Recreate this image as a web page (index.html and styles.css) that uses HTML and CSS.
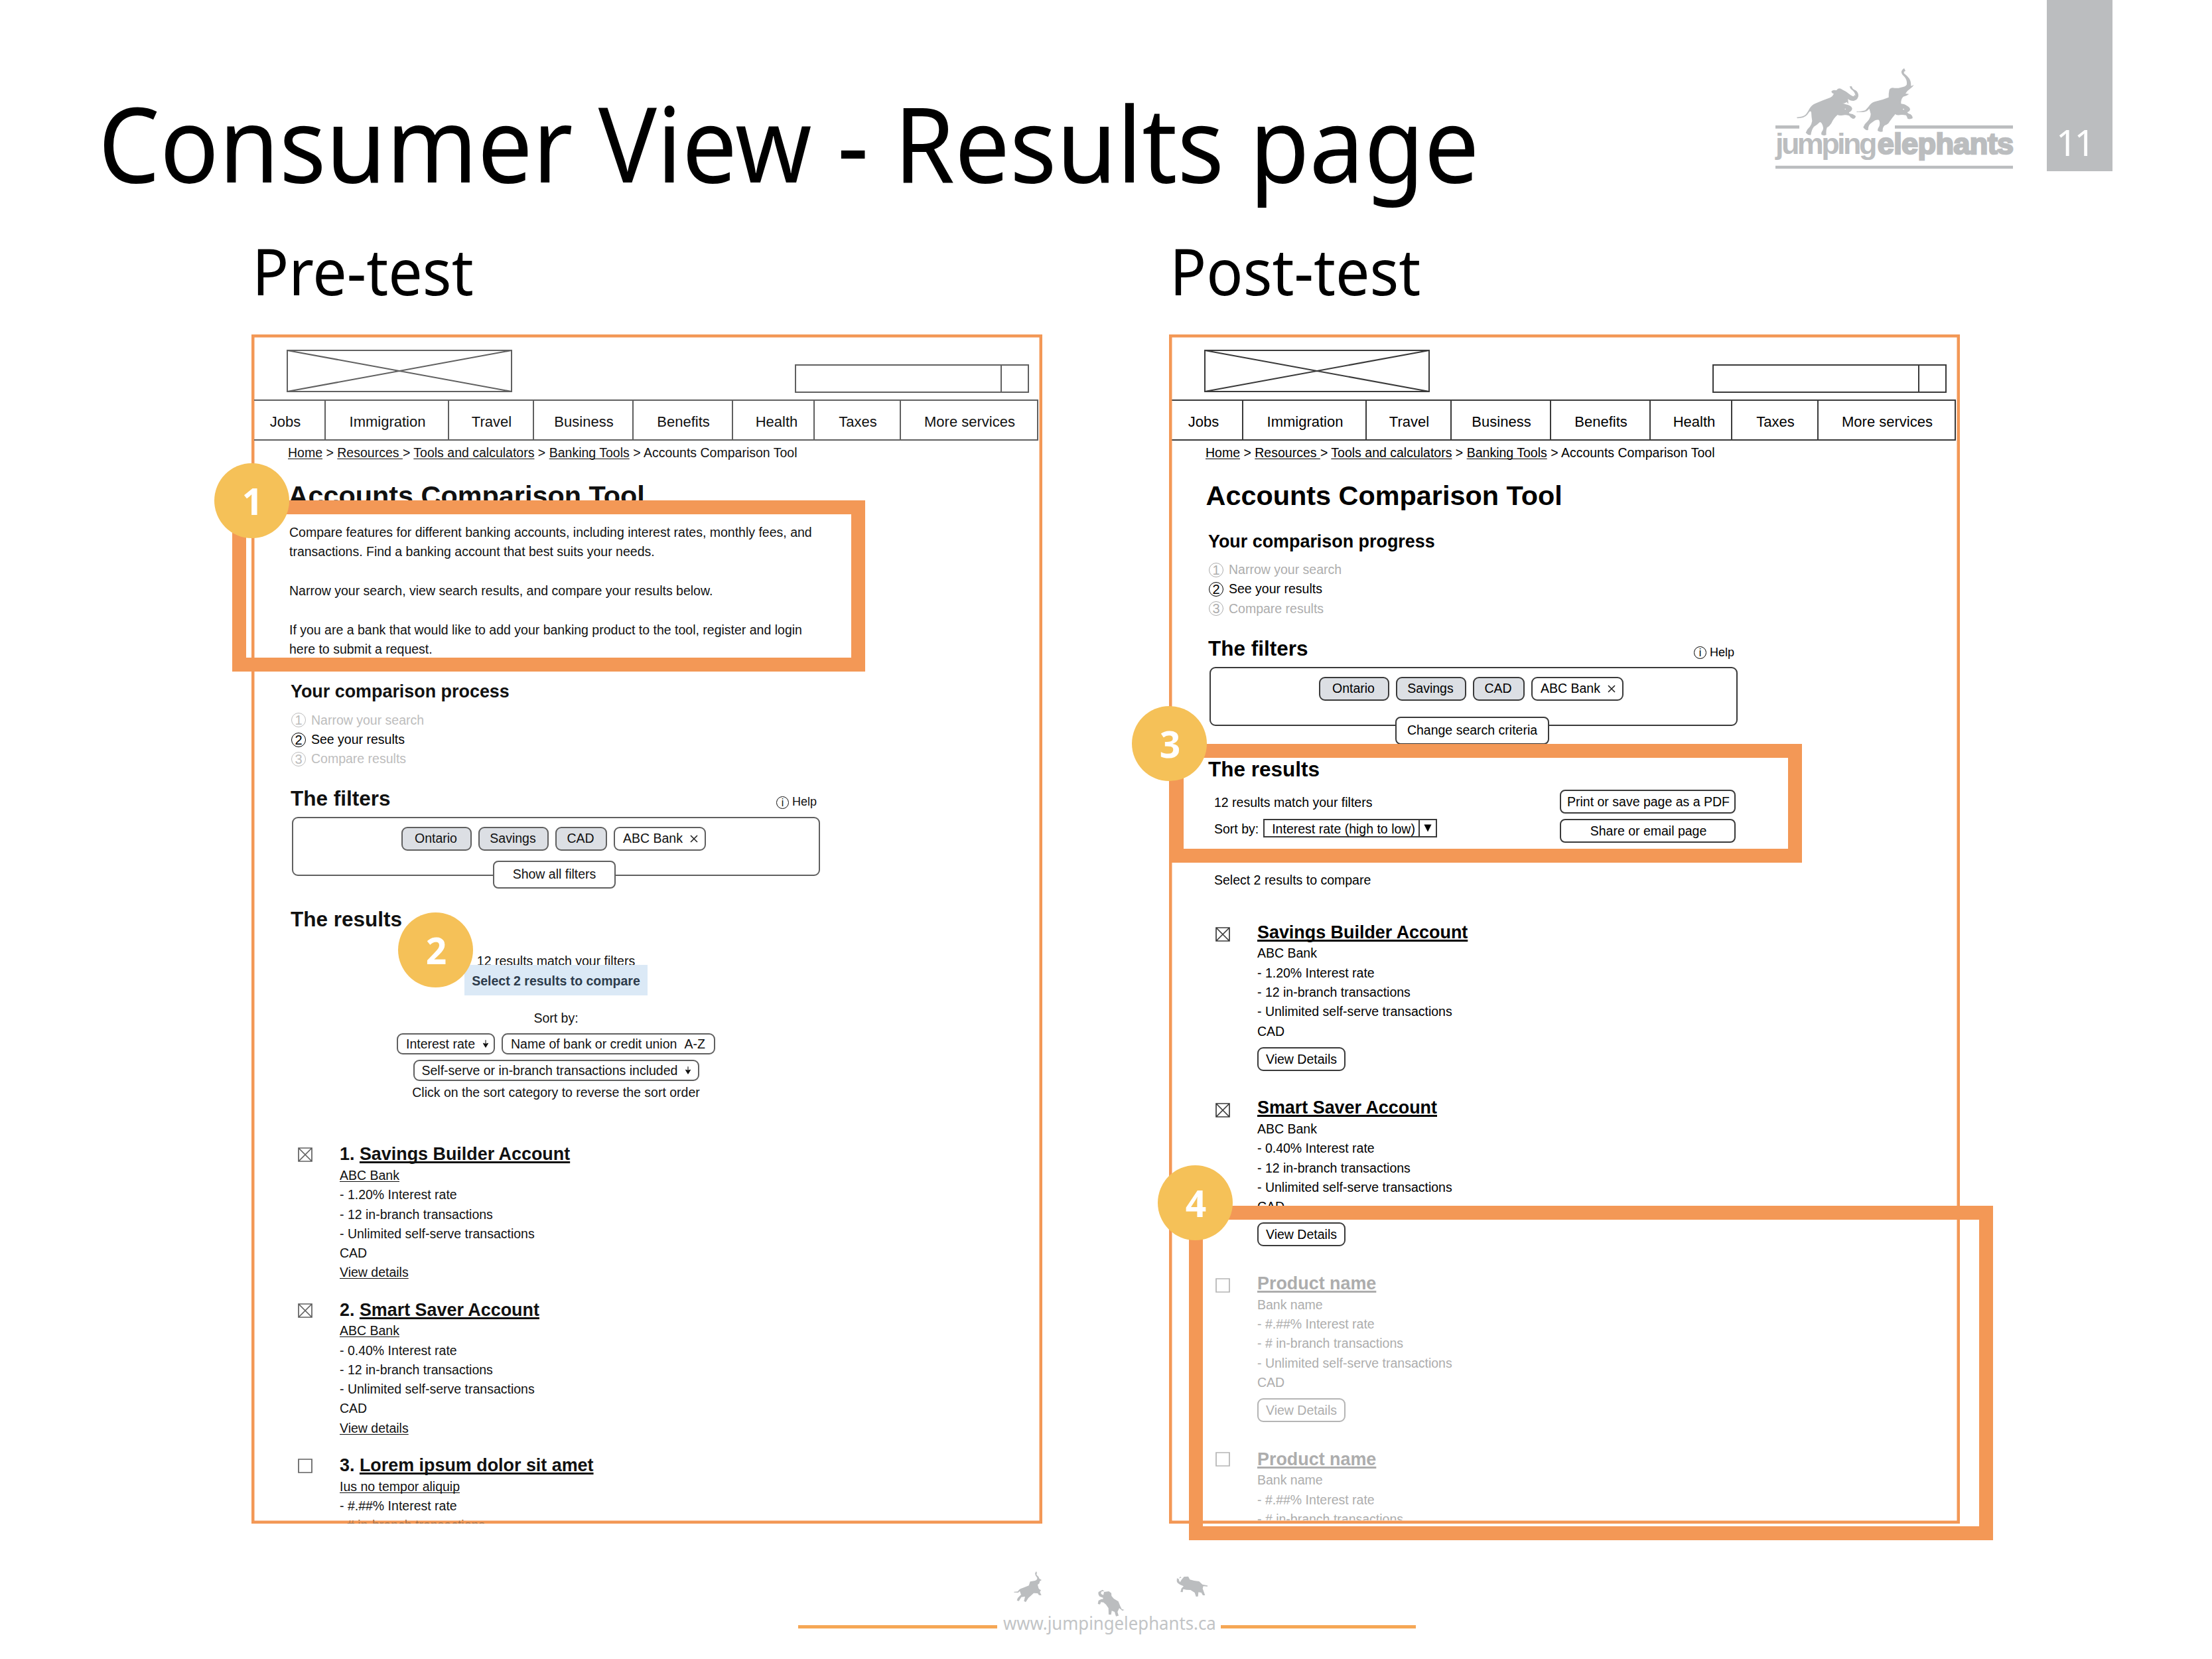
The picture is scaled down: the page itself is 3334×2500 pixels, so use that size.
FILE: index.html
```html
<!DOCTYPE html>
<html lang="en">
<head>
<meta charset="utf-8">
<title>Consumer View - Results page</title>
<link rel="stylesheet" href="styles.css">
</head>
<body>
<div class="slide">
  <header class="slide-header">
    <h1 class="slide-title"><span class="fit">Consumer View - Results page</span></h1>
    <div class="brand">
      <svg class="brand-art" viewBox="0 0 1074 420">
        <path d="M0 180H108V194H0Z M540 180H1074V194H540Z M0 362H1074V376H0Z" transform="translate(0 3)"/>
        <g transform="translate(72 -99)">
          <path d="M24 245 Q52 245 66 232 Q76 218 82 206 Q92 190 108 183 Q150 165 176 156 Q188 150 192 139 Q181 135 181 128 Q188 120 200 123 Q207 124 209 117 Q221 112 230 120 Q248 128 262 140 Q276 151 284 150 L284 143 L290 148 Q287 132 277 124 Q266 117 263 106 L273 105 Q275 118 290 123 Q304 132 303 150 Q298 169 280 171 Q264 171 256 162 L258 185 L250 176 Q240 185 229 181 L246 187 Q268 190 275 204 Q275 216 262 222 Q258 227 266 229 Q280 230 291 240 Q290 252 278 252 Q266 246 261 238 Q246 233 232 236 Q214 238 209 234 Q190 251 181 272 Q172 286 161 292 Q156 306 158 325 Q148 330 137 325 Q132 316 142 304 Q148 290 137 272 Q131 265 128 268 Q115 281 102 288 Q91 302 88 325 Q76 328 65 315 Q71 298 84 287 Q92 276 94 262 Q91 244 90 222 Q85 213 78 225 Q66 246 42 248 L27 250 Z M240 207 L246 211 L246 206 Z"/>
          <path d="M295 219 Q316 221 334 214 Q348 199 356 188 Q366 176 382 173 Q414 166 440 155 Q439 139 443 121 Q450 108 467 113 Q479 115 496 110 Q516 108 522 97 Q524 76 510 61 Q495 49 498 37 Q501 29 510 23 L516 36 Q506 38 510 47 Q522 55 533 70 Q542 84 541 104 L554 99 Q548 109 536 117 Q522 126 516 138 L532 140 Q520 150 506 152 Q494 164 496 184 Q514 186 522 193 Q536 200 537 210 Q534 220 524 222 Q526 228 538 231 Q550 240 548 250 Q538 255 526 252 Q523 242 519 236 Q500 232 490 235 Q476 237 470 231 Q456 247 444 265 Q438 278 422 282 Q411 292 413 310 Q401 314 390 306 Q390 296 398 284 Q402 268 396 257 Q382 253 364 269 Q346 279 347 303 Q335 306 325 290 Q332 274 346 262 Q358 247 359 230 Q355 214 352 206 Q343 220 322 222 L296 222 Z M503 208 L509 212 L510 206 Z"/>
        </g>
      </svg>
      <div class="brand-name"><span class="brand-a">jumping</span><span class="brand-b">elephants</span></div>
    </div>
    <div class="page-number">11</div>
  </header>

  <main class="columns">
    <section class="column">
      <h2 class="column-title"><span class="fit">Pre-test</span></h2>
      <div class="panel pre">
        <div class="masthead">
          <svg class="logo-box" viewBox="0 0 340 64"><path d="M1 1H339V63H1Z L339 63 M1 63L339 1"/></svg>
          <div class="search"><span></span></div>
        </div>
        <nav class="menu"><span>Jobs</span><span>Immigration</span><span>Travel</span><span>Business</span><span>Benefits</span><span>Health</span><span>Taxes</span><span>More services</span></nav>
        <div class="crumbs"><u>Home</u> &gt; <u>Resources </u>&gt; <u>Tools and calculators</u> &gt; <u>Banking Tools</u> &gt; Accounts Comparison Tool</div>
        <h3 class="tool-title">Accounts Comparison Tool</h3>
        <div class="intro">
          <p>Compare features for different banking accounts, including interest rates, monthly fees, and<br>transactions. Find a banking account that best suits your needs.</p>
          <p>Narrow your search, view search results, and compare your results below.</p>
          <p>If you are a bank that would like to add your banking product to the tool, register and login<br>here to submit a request.</p>
        </div>
        <h4 class="progress-title">Your comparison process</h4>
        <ol class="steps">
          <li><i>1</i>Narrow your search</li>
          <li class="current"><i>2</i>See your results</li>
          <li><i>3</i>Compare results</li>
        </ol>
        <div class="filters-head"><h4 class="section-title">The filters</h4><span class="help"><i>i</i>Help</span></div>
        <div class="filters">
          <span class="chip on">Ontario</span><span class="chip on">Savings</span><span class="chip on cad">CAD</span><span class="chip bank">ABC Bank<svg viewBox="0 0 12 12"><path d="M1 1L11 11M11 1L1 11"/></svg></span>
          <span class="filters-button">Show all filters</span>
        </div>
        <h4 class="section-title results-title">The results</h4>
        <div class="results-bar">
          <div class="match">12 results match your filters</div>
          <div class="highlight">Select 2 results to compare</div>
          <div class="sort-label">Sort by:</div>
          <div class="sort-row"><span class="pill rate">Interest rate<svg class="arrow" viewBox="0 0 9 13"><path d="M4.500 0V12M0.500 5.500L4.500 12L8.500 5.500Q4.500 8 0.500 5.500Z"/></svg></span><span class="pill name">Name of bank or credit union<span class="az">A-Z</span></span></div>
          <div class="sort-row"><span class="pill self">Self-serve or in-branch transactions included<svg class="arrow" viewBox="0 0 9 13"><path d="M4.500 0V12M0.500 5.500L4.500 12L8.500 5.500Q4.500 8 0.500 5.500Z"/></svg></span></div>
          <div class="sort-note">Click on the sort category to reverse the sort order</div>
        </div>
        <div class="items">
          <article class="item">
            <svg class="check" viewBox="0 0 22 22"><path d="M1 1H21V21H1Z L21 21M1 21L21 1"/></svg>
            <div><h5>1. <u>Savings Builder Account</u></h5><p><u>ABC Bank</u></p><p>- 1.20% Interest rate</p><p>- 12 in-branch transactions</p><p>- Unlimited self-serve transactions</p><p>CAD</p><p><u>View details</u></p></div>
          </article>
          <article class="item">
            <svg class="check" viewBox="0 0 22 22"><path d="M1 1H21V21H1Z L21 21M1 21L21 1"/></svg>
            <div><h5>2. <u>Smart Saver Account</u></h5><p><u>ABC Bank</u></p><p>- 0.40% Interest rate</p><p>- 12 in-branch transactions</p><p>- Unlimited self-serve transactions</p><p>CAD</p><p><u>View details</u></p></div>
          </article>
          <article class="item">
            <svg class="check" viewBox="0 0 22 22"><path d="M1 1H21V21H1Z"/></svg>
            <div><h5>3. <u>Lorem ipsum dolor sit amet</u></h5><p><u>Ius no tempor aliquip</u></p><p>- #.##% Interest rate</p><p class="faded"># in-branch transactions</p></div>
          </article>
        </div>
      </div>
    </section>

    <section class="column">
      <h2 class="column-title"><span class="fit">Post-test</span></h2>
      <div class="panel post">
        <div class="masthead">
          <svg class="logo-box" viewBox="0 0 340 64"><path d="M1 1H339V63H1Z L339 63 M1 63L339 1"/></svg>
          <div class="search"><span></span></div>
        </div>
        <nav class="menu"><span>Jobs</span><span>Immigration</span><span>Travel</span><span>Business</span><span>Benefits</span><span>Health</span><span>Taxes</span><span>More services</span></nav>
        <div class="crumbs"><u>Home</u> &gt; <u>Resources </u>&gt; <u>Tools and calculators</u> &gt; <u>Banking Tools</u> &gt; Accounts Comparison Tool</div>
        <h3 class="tool-title">Accounts Comparison Tool</h3>
        <h4 class="progress-title">Your comparison progress</h4>
        <ol class="steps">
          <li><i>1</i>Narrow your search</li>
          <li class="current"><i>2</i>See your results</li>
          <li><i>3</i>Compare results</li>
        </ol>
        <div class="filters-head"><h4 class="section-title">The filters</h4><span class="help"><i>i</i>Help</span></div>
        <div class="filters">
          <span class="chip on">Ontario</span><span class="chip on">Savings</span><span class="chip on cad">CAD</span><span class="chip bank">ABC Bank<svg viewBox="0 0 12 12"><path d="M1 1L11 11M11 1L1 11"/></svg></span>
          <span class="filters-button wide">Change search criteria</span>
        </div>
        <h4 class="section-title results-title">The results</h4>
        <div class="tools">
          <div class="tools-left">
            <div>12 results match your filters</div>
            <div class="sort-line">Sort by:<span class="select"><span>Interest rate (high to low)</span><svg viewBox="0 0 26 26"><path d="M7 7H19L13 19Z"/></svg></span></div>
          </div>
          <div class="tools-right"><span class="action">Print or save page as a PDF</span><span class="action">Share or email page</span></div>
        </div>
        <div class="select-note">Select 2 results to compare</div>
        <div class="items">
          <article class="item">
            <svg class="check" viewBox="0 0 22 22"><path d="M1 1H21V21H1Z L21 21M1 21L21 1"/></svg>
            <div><h5><u>Savings Builder Account</u></h5><p>ABC Bank</p><p>- 1.20% Interest rate</p><p>- 12 in-branch transactions</p><p>- Unlimited self-serve transactions</p><p>CAD</p><span class="details">View Details</span></div>
          </article>
          <article class="item">
            <svg class="check" viewBox="0 0 22 22"><path d="M1 1H21V21H1Z L21 21M1 21L21 1"/></svg>
            <div><h5><u>Smart Saver Account</u></h5><p>ABC Bank</p><p>- 0.40% Interest rate</p><p>- 12 in-branch transactions</p><p>- Unlimited self-serve transactions</p><p>CAD</p><span class="details">View Details</span></div>
          </article>
          <article class="item muted">
            <svg class="check" viewBox="0 0 22 22"><path d="M1 1H21V21H1Z"/></svg>
            <div><h5><u>Product name</u></h5><p>Bank name</p><p>- #.##% Interest rate</p><p>- # in-branch transactions</p><p>- Unlimited self-serve transactions</p><p>CAD</p><span class="details">View Details</span></div>
          </article>
          <article class="item muted">
            <svg class="check last" viewBox="0 0 22 22"><path d="M1 1H21V21H1Z"/></svg>
            <div><h5><u>Product name</u></h5><p>Bank name</p><p>- #.##% Interest rate</p><p>- # in-branch transactions</p></div>
          </article>
        </div>
      </div>
    </section>
  </main>

  <footer class="slide-footer">
    <span class="rule left"></span>
    <span class="site">www.jumpingelephants.ca</span>
    <span class="rule right"></span>
    <svg class="herd" viewBox="0 0 990 330">
      <path d="M156 23 L159 32 Q154 36 160 43 Q168 48 170 57 L180 63 L172 68 L169 79 L162 84 L166 100 Q170 108 177 109 L172 117 L179 132 L168 131 L162 123 L144 122 L131 134 L120 144 L108 163 L100 158 L105 138 L88 140 L77 158 L68 155 L72 144 L87 129 L81 113 L74 120 L55 119 L55 116 L72 115 Q80 102 94 99 L122 88 L128 70 L150 66 Q161 62 160 53 Q150 43 150 32 Z"/>
      <path d="M455 107 L464 114 L452 114 Q446 118 449 126 L459 131 L462 117 L484 114 L495 122 L496 135 L506 147 L527 160 L535 180 L542 194 L554 198 L545 202 L531 190 L523 207 L528 224 L516 227 L510 207 L497 202 L494 220 L483 219 L482 190 L471 174 L460 164 L448 163 L444 173 L434 171 L437 156 L450 149 L457 149 L458 143 L442 137 Q434 128 437 117 Z"/>
      <path d="M807 47 L812 52 L803 55 Q797 63 806 73 L812 62 L824 48 L843 47 L850 61 L870 66 L892 69 L907 83 L930 88 L930 92 L911 91 L908 101 L919 132 L909 132 L902 120 L889 118 L887 137 L878 138 L872 120 L853 108 L835 107 L820 104 L818 118 L808 117 L812 101 L822 91 L806 84 Q791 76 791 67 L792 54 L799 59 Z"/>
    </svg>
  </footer>

  <div class="frame frame-1"></div>
  <div class="frame frame-3"></div>
  <div class="frame frame-4"></div>
  <div class="badge badge-1">1</div>
  <div class="badge badge-2">2</div>
  <div class="badge badge-3">3</div>
  <div class="badge badge-4">4</div>
</div>
</body>
</html>
```
FILE: styles.css
```css
* { box-sizing: border-box; }
body { margin: 0; background: #fff; }
h1, h2, h3, h4, h5, p, ol { margin: 0; padding: 0; }
i { font-style: normal; }

.slide {
  position: relative;
  width: 3334px;
  height: 2500px;
  overflow: hidden;
  background: #fff;
  color: #000;
  font-family: "Noto Sans", "Open Sans", sans-serif;
}
.fit { display: inline-block; transform-origin: left center; transform: scaleX(0.937); }

/* header */
.slide-header { display: flex; height: 352.5px; }
.slide-title {
  flex: none;
  width: 2677px;
  padding: 134px 0 0 148px;
  font-size: 157px;
  font-weight: 400;
  line-height: 160px;
  white-space: nowrap;
}
.brand { position: relative; flex: none; width: 358px; margin-left: -1px; padding-top: 192px; color: #bbbdbf; }
.brand-art { position: absolute; left: 0; top: 128px; width: 358px; height: 140px; overflow: visible; fill: #bbbdbf; }
.brand-name {
  position: relative;
  font: bold 45px/50px "Liberation Sans", Arial, sans-serif;
  white-space: nowrap;
}
.brand-a { letter-spacing: -3.6px; }
.brand-b { letter-spacing: -0.6px; -webkit-text-stroke: 2.500px #bbbdbf; margin-left: 4px; }
.page-number {
  flex: none;
  width: 99px;
  height: 258px;
  margin-left: 51px;
  padding: 176px 0 0 14px;
  background: #bbbdbf;
  color: #fff;
  font-size: 55px;
  line-height: 75px;
  letter-spacing: -4px;
}

/* columns */
.columns { display: flex; gap: 191px; padding-left: 379px; }
.column { width: 1192px; }
.column-title {
  margin: 0 0 41.5px 1px;
  font-size: 97.6px;
  font-weight: 400;
  line-height: 110px;
  white-space: nowrap;
}

.panel {
  --line: #606060;
  --dim: #bdbdbd;
  height: 1791.500px;
  overflow: hidden;
  box-shadow: inset 0 0 0 4.500px #f39856;
  color: #111;
  font: 19.5px/29.3px "Liberation Sans", Arial, sans-serif;
  white-space: nowrap;
}
.panel.post { --line: #3a3a3a; --dim: #adadad; color: #000; height: 1787px; box-shadow: none; }
.column:last-child { position: relative; height: 1943.500px; }
.column:last-child::before {
  content: "";
  position: absolute;
  inset: 151.500px 0 0 0;
  box-shadow: inset 0 0 0 4.500px #f39856;
}

.masthead { display: flex; justify-content: space-between; height: 98px; padding: 23px 20px 0 53px; }
.logo-box { width: 340px; height: 64px; fill: none; stroke: var(--line); stroke-width: 2; }
.search { width: 353px; height: 43px; margin-top: 21.5px; border: 2px solid var(--line); }
.search span { display: block; width: 310px; height: 100%; border-right: 2px solid var(--line); }

.menu {
  display: grid;
  grid-template-columns: 112px 186px 128px 150px 150px 123px 130px 207px;
  width: 1186px;
  height: 62px;
  border: solid var(--line);
  border-width: 2px 0;
  font-size: 22px;
}
.pre .menu { clip-path: inset(0 0 0 4px); }
.menu span { display: flex; align-items: center; justify-content: center; border-right: 2px solid var(--line); padding: 5px 0 0 2px; }
.menu span:first-child { padding-right: 10px; }
.menu span:nth-child(6) { padding-left: 10px; }
.post .menu span:first-child { border-left: 2px solid #8a5f3f; }

.crumbs { margin: 3.6px 0 0 55px; }
u { text-underline-offset: 2px; text-decoration-thickness: 1px; text-decoration-skip-ink: none; }
.tool-title { margin: 25.8px 0 0 55.500px; font-size: 41.4px; line-height: 48px; }
.intro { margin: 17.5px 0 0 57px; }
.intro p + p { margin-top: 29.3px; }
.progress-title { margin: 33.8px 0 0 59px; font-size: 26.9px; line-height: 30px; }
.post .progress-title { margin-top: 29.9px; }
.steps { margin: 13.5px 0 0 60px; list-style: none; color: var(--dim); }
.steps li { display: flex; align-items: center; height: 29.3px; }
.steps i {
  width: 22px;
  height: 22px;
  margin-right: 8px;
  border: 1.5px solid currentColor;
  border-radius: 50%;
  font-size: 20px;
  line-height: 21px;
  text-align: center;
}
.steps .current { color: #000; }
.filters-head { display: flex; justify-content: space-between; width: 852px; height: 36px; margin-top: 26.6px; padding-left: 59px; }
.post .filters-head { margin-top: 27.4px; }
.section-title { font-size: 31.5px; line-height: 36px; }
.help { display: flex; align-items: center; height: 30px; margin-top: 9px; font-size: 18px; }
.help i { width: 19px; height: 19px; margin-right: 5px; border: 1.5px solid currentColor; border-radius: 50%; font-size: 16px; line-height: 17px; text-align: center; }
.filters {
  position: relative;
  display: flex;
  gap: 10px;
  width: 796px;
  height: 89px;
  margin: 10px 0 0 61px;
  padding: 13px 0 0 163px;
  border: 2px solid var(--line);
  border-radius: 9px;
}
.chip { width: 106px; height: 36px; border: 2px solid var(--line); border-radius: 9px; line-height: 31px; text-align: center; padding-right: 2px; }
.chip.on { background: #dcdfe4; }
.chip.cad { width: 78px; }
.chip.bank { width: 139px; text-align: left; padding-left: 12px; }
.chip svg { width: 12px; height: 12px; margin-left: 11px; fill: none; stroke: #222; stroke-width: 1.6; }
.filters-button {
  position: absolute;
  left: 301px;
  top: 64px;
  width: 185px;
  height: 42px;
  border: 2px solid var(--line);
  border-radius: 8px;
  background: #fff;
  line-height: 36px;
  text-align: center;
}
.filters-button.wide { left: 278px; top: 73px; width: 232px; }
.results-title { margin: 46.5px 0 0 59px; }

/* pre-test results toolbar */
.results-bar { width: 796px; margin: 31.5px 0 0 61px; text-align: center; }
.highlight {
  position: relative;
  width: 276px;
  margin: -8.9px auto 0;
  padding: 9.6px 0 6.6px;
  background: #dbe9f6;
  color: #2d3b4b;
  font-weight: bold;
}
.sort-label { margin-top: 19.7px; }
.sort-row { display: flex; justify-content: center; gap: 10px; margin-top: 8px; }
.pill { display: flex; align-items: center; height: 32px; border: 2px solid var(--line); border-radius: 9px; line-height: 28px; }
.pill.rate { width: 148px; padding-left: 12px; }
.pill.name { width: 322px; padding-left: 12px; }
.pill.self { width: 431px; padding-left: 11px; }
.arrow { width: 8px; height: 12px; margin-left: 12px; stroke: #111; stroke-width: 1.2; fill: #111; overflow: visible; }
.az { margin-left: 11px; }
.sort-note { margin-top: 3.1px; }

/* post-test results toolbar */
.tools { display: flex; justify-content: space-between; width: 854px; margin-top: 13.3px; padding-left: 68px; }
.tools-left { padding-top: 4.6px; }
.sort-line { display: flex; align-items: flex-start; margin-top: 11px; }
.select { display: flex; width: 262px; height: 28px; margin: -1px 0 0 7px; border: 2px solid var(--line); line-height: 27px; }
.select span { width: 234px; padding-left: 11px; border-right: 2px solid var(--line); }
.select svg { width: 24px; height: 24px; fill: #000; }
.tools-right { display: flex; flex-direction: column; gap: 8px; width: 265px; }
.action { height: 36px; border: 2px solid var(--line); border-radius: 8px; line-height: 33px; text-align: center; padding-left: 2px; }
.select-note { margin: 41.6px 0 0 68px; }

/* result list */
.items { margin: 61.8px 0 0 70px; }
.post .items { margin-top: 47.6px; }
.item { display: flex; min-height: 209.6px; margin-bottom: 24.8px; }
.post .item { min-height: 224.600px; margin-bottom: 39.8px; }
.check { width: 22px; height: 22px; margin: 6.3px 41px 0 0; fill: none; stroke: var(--line); stroke-width: 1.7; }
.post .check { margin-top: 8.500px; }
.post .check.last { margin-top: 5px; }
.item h5 { margin-bottom: 1.8px; font-size: 26.9px; line-height: 32px; }
.item h5 u { text-decoration-thickness: 2.500px; }
.faded { color: #a8744c; padding-left: 11px; }
.details { display: block; width: 133px; height: 36px; margin-top: 8.6px; border: 2px solid var(--line); border-radius: 9px; line-height: 32px; text-align: center; }
.muted { --line: #b5b5b5; color: #adadad; }

/* footer */
.slide-footer {
  position: absolute;
  left: 1203px;
  top: 2360px;
  display: flex;
  align-items: flex-end;
  width: 931px;
  height: 110px;
}
.rule { flex: none; height: 5px; margin-bottom: 16px; background: #f5a755; }
.rule.left { width: 300px; }
.rule.right { width: 294px; margin-left: auto; }
.site { flex: none; width: 315px; margin: 0 0 4px 9px; color: #c2c4c6; font-size: 27.5px; line-height: 40px; white-space: nowrap; transform-origin: left center; transform: scaleX(0.937); }
.herd { position: absolute; left: 307px; top: 0; width: 330px; height: 110px; fill: #bbbdbf; }

/* callouts */
.frame { position: absolute; border: 21px solid #f39856; }
.frame-1 { left: 350px; top: 754px; width: 954px; height: 258px; }
.frame-3 { left: 1763px; top: 1121px; width: 953px; height: 179px; }
.frame-4 { left: 1792px; top: 1817px; width: 1212px; height: 504px; }
.badge {
  position: absolute;
  width: 113px;
  height: 113px;
  border-radius: 50%;
  background: #f5c158;
  color: #fff;
  font-size: 55px;
  font-weight: bold;
  line-height: 113px;
  text-align: center;
  text-indent: 2px;
}
.badge-1 { left: 323px; top: 698px; }
.badge-2 { left: 600px; top: 1375px; }
.badge-3 { left: 1706px; top: 1064px; }
.badge-4 { left: 1745px; top: 1756px; }
```
